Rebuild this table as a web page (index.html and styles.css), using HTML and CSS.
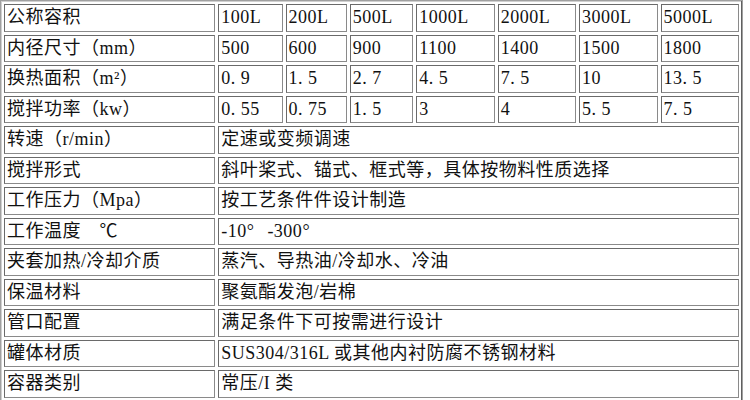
FILE: index.html
```html
<!DOCTYPE html>
<html lang="zh">
<head>
<meta charset="utf-8">
<link rel="stylesheet" href="styles.css">
</head>
<body>
<table class="spec">
<colgroup>
<col class="c-name"><col class="c-a"><col class="c-b"><col class="c-c"><col class="c-d"><col class="c-d"><col class="c-d"><col class="c-d">
</colgroup>
<tr><td>公称容积</td><td>100L</td><td>200L</td><td>500L</td><td>1000L</td><td>2000L</td><td>3000L</td><td>5000L</td></tr>
<tr><td>内径尺寸（mm）</td><td>500</td><td>600</td><td>900</td><td>1100</td><td>1400</td><td>1500</td><td>1800</td></tr>
<tr><td>换热面积（m²）</td><td>0<span class="dot">.</span>9</td><td>1<span class="dot">.</span>5</td><td>2<span class="dot">.</span>7</td><td>4<span class="dot">.</span>5</td><td>7<span class="dot">.</span>5</td><td>10</td><td>13<span class="dot">.</span>5</td></tr>
<tr><td>搅拌功率（kw）</td><td>0<span class="dot">.</span>55</td><td>0<span class="dot">.</span>75</td><td>1<span class="dot">.</span>5</td><td>3</td><td>4</td><td>5<span class="dot">.</span>5</td><td>7<span class="dot">.</span>5</td></tr>
<tr><td>转速（r/min）</td><td colspan="7">定速或变频调速</td></tr>
<tr><td>搅拌形式</td><td colspan="7">斜叶桨式、锚式、框式等，具体按物料性质选择</td></tr>
<tr><td>工作压力（Mpa）</td><td colspan="7">按工艺条件件设计制造</td></tr>
<tr><td>工作温度　℃</td><td colspan="7">-10<span class="deg">°</span> -300<span class="deg">°</span></td></tr>
<tr><td>夹套加热/冷却介质</td><td colspan="7">蒸汽、导热油/冷却水、冷油</td></tr>
<tr><td>保温材料</td><td colspan="7">聚氨酯发泡/岩棉</td></tr>
<tr><td>管口配置</td><td colspan="7">满足条件下可按需进行设计</td></tr>
<tr><td>罐体材质</td><td colspan="7">SUS304/316L 或其他内衬防腐不锈钢材料</td></tr>
<tr><td>容器类别</td><td colspan="7">常压/I 类</td></tr>
</table>
</body>
</html>
```
FILE: styles.css
```css
html, body {
  margin: 0;
  padding: 0;
  background: #fff;
}
.spec {
  table-layout: fixed;
  width: 743px;
  border-collapse: separate;
  border-spacing: 3px;
  border: 1px solid #a0a0a0;
  box-shadow: inset -1px -1px 0 #606060, inset 1px 1px 0 #d0d0d0;
  font-family: "Liberation Serif", "Noto Sans CJK SC", serif;
  font-size: 18px;
  letter-spacing: 0.5px;
  color: #111;
}
.c-name { width: 210px; }
.c-a { width: 64px; }
.c-b { width: 61px; }
.c-c { width: 63px; }
.c-d { width: 78px; }
.spec td {
  height: 27.5px;
  box-sizing: border-box;
  padding: 0 0 0 2px;
  border: 1px solid #6a6a6a;
  border-right-color: #8a8a8a;
  border-bottom-color: #8a8a8a;
  line-height: 25px;
  white-space: nowrap;
  overflow: hidden;
  vertical-align: middle;
}
.dot {
  padding-right: 5px;
}
.deg {
  padding-right: 8px;
}
```
